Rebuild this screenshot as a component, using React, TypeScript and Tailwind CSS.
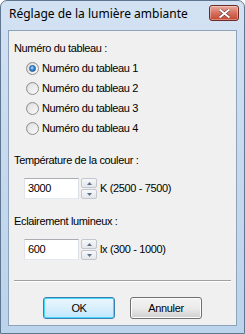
import React from "react";

function Radio({ checked }: { checked?: boolean }) {
  return (
    <div className="relative w-[13px] h-[13px] rounded-full border border-[#8e8f8f] bg-gradient-to-br from-[#d4d4d4] to-[#fbfbfb] flex items-center justify-center shrink-0">
      <div className="w-[9px] h-[9px] rounded-full bg-gradient-to-br from-[#e2e2e2] to-[#f8f8f8] flex items-center justify-center">
        {checked && (
          <div className="w-[7px] h-[7px] rounded-full bg-[radial-gradient(circle_at_40%_35%,#b7e1ff_0%,#3b8fe0_45%,#1c4f96_100%)] border border-[#1e5596]" />
        )}
      </div>
    </div>
  );
}

function Spinner() {
  return (
    <div className="flex flex-col w-[16px] h-[21px] gap-[1px] ml-[2px]">
      <div className="flex-1 rounded-[2px] border border-[#c2c7cf] bg-gradient-to-b from-[#f7f8fa] to-[#e4e6ea] flex items-center justify-center">
        <svg width="5" height="3" viewBox="0 0 5 3">
          <path d="M0 3 L2.5 0 L5 3 Z" fill="#5a6e8e" />
        </svg>
      </div>
      <div className="flex-1 rounded-[2px] border border-[#c2c7cf] bg-gradient-to-b from-[#f7f8fa] to-[#e4e6ea] flex items-center justify-center">
        <svg width="5" height="3" viewBox="0 0 5 3">
          <path d="M0 0 L2.5 3 L5 0 Z" fill="#5a6e8e" />
        </svg>
      </div>
    </div>
  );
}

function NumField({ value, label }: { value: string; label: string }) {
  return (
    <div className="flex items-center ml-[10px] h-[21px]">
      <div className="w-[55px] h-[21px] bg-white border border-[#abadb3] border-b-[#e3e9ef] border-r-[#dbdfe6] border-l-[#e2e3ea] flex items-center pl-[3px] text-black">
        {value}
      </div>
      <Spinner />
      <span className="ml-[3px] text-black">{label}</span>
    </div>
  );
}

export default function App() {
  const radios = ["Numéro du tableau 1", "Numéro du tableau 2", "Numéro du tableau 3", "Numéro du tableau 4"];
  return (
    <div className="w-[245px] h-[334px] overflow-hidden bg-white">
      <div className="w-full h-full rounded-t-[7px] border border-[#5f7691] bg-gradient-to-b from-[#d3e2f3] via-[#c6d9ee] to-[#bcd3ec] flex flex-col px-[7px] pb-[7px]">
        <div className="h-[29px] flex items-start justify-between">
          <span className="mt-[5px] ml-[1px] font-['Noto_Sans',sans-serif] text-[12px] leading-[16px] text-black">
            Réglage de la lumière ambiante
          </span>
          <div className="mt-[4px] mr-[-2px] w-[30px] h-[16px] rounded-[3px] border border-[#6d2a22] bg-gradient-to-b from-[#e8aa9c] via-[#d5705f] to-[#c3462f] flex items-center justify-center shadow-[inset_0_0_0_1px_rgba(255,255,255,0.35)]">
            <svg width="11" height="9" viewBox="0 0 11 9">
              <path d="M1 0.8 L10 8.2 M10 0.8 L1 8.2" stroke="#5a2a24" strokeWidth="3" strokeLinecap="square" />
              <path d="M1.3 1 L9.7 8 M9.7 1 L1.3 8" stroke="#ffffff" strokeWidth="2" strokeLinecap="square" />
            </svg>
          </div>
        </div>
        <div className="flex-1 border border-[#8da2bb] bg-[#f0f0f0] flex flex-col px-[5px] pt-[11px] font-['Liberation_Sans',Arial,sans-serif] text-[11px] leading-[13px] tracking-[-0.35px] text-black">
          <div>Numéro du tableau :</div>
          <div className="flex flex-col mt-[3px]">
            {radios.map((r, i) => (
              <div key={r} className="h-[20px] flex items-center ml-[12px]">
                <Radio checked={i === 0} />
                <span className="ml-[3px]">{r}</span>
              </div>
            ))}
          </div>
          <div className="mt-[16px]">Température de la couleur :</div>
          <div className="mt-[11px]">
            <NumField value="3000" label="K (2500 - 7500)" />
          </div>
          <div className="mt-[16px]">Eclairement lumineux :</div>
          <div className="mt-[11px]">
            <NumField value="600" label="lx (300 - 1000)" />
          </div>
          <div className="mt-[20px] border-t border-[#a0a0a0] border-b border-b-white" />
          <div className="mt-[15px] flex justify-center gap-[15px]">
            <div className="w-[72px] h-[22px] rounded-[3px] border border-[#3c7fb1] shadow-[inset_0_0_0_1px_#48d8fb] bg-gradient-to-b from-[#eaf6fd] via-[#d9f0fc] to-[#bee6fd] flex items-center justify-center">
              OK
            </div>
            <div className="w-[72px] h-[22px] rounded-[3px] border border-[#707070] shadow-[inset_0_0_0_1px_#fcfcfc] bg-gradient-to-b from-[#f2f2f2] via-[#ebebeb] to-[#cfcfcf] flex items-center justify-center">
              Annuler
            </div>
          </div>
        </div>
      </div>
    </div>
  );
}
